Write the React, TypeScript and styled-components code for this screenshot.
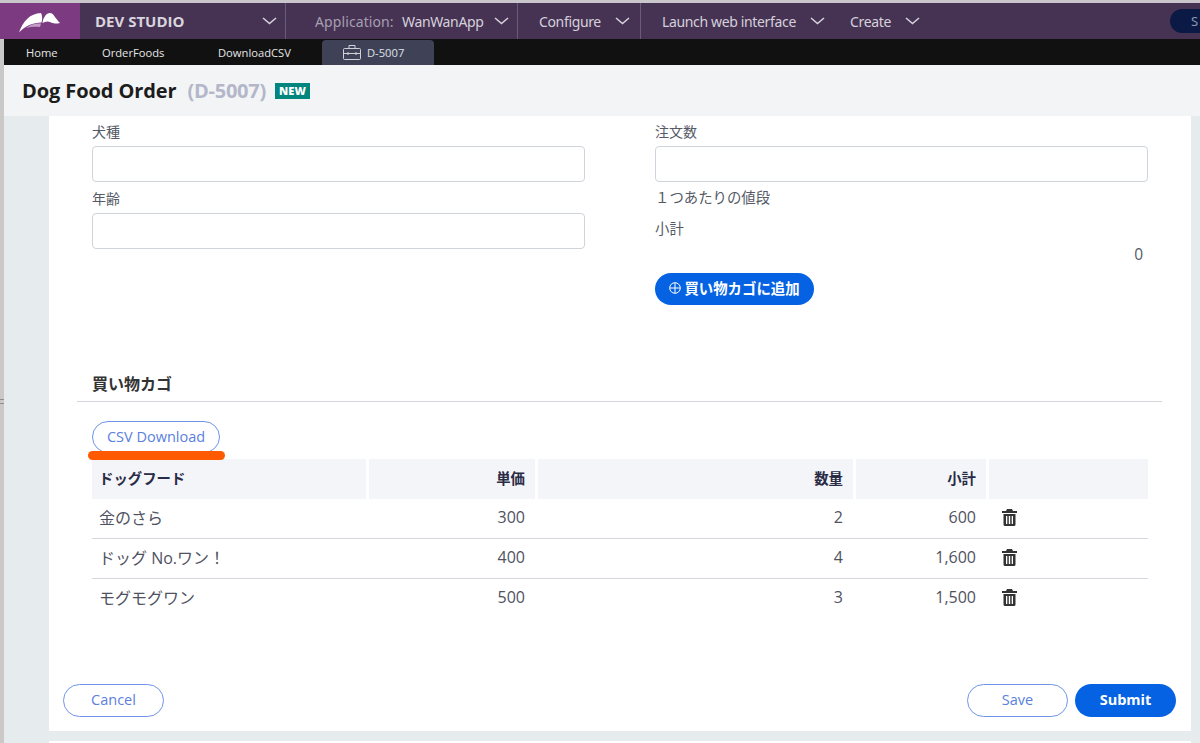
import styled, { createGlobalStyle } from "styled-components";

const GlobalStyle = createGlobalStyle`
    html, body {
        margin: 0;
        padding: 0;
        background: #ffffff;
    }
    body {
        font-family: "Open Sans", "Noto Sans CJK JP", sans-serif;
    }
`;

const Page = styled.div`
    position: relative;
    width: 1200px;
    height: 743px;
    overflow: hidden;
    background: #e6ebee;
`;

const TopEdge = styled.div`
    height: 3px;
    background: #c9c6cc;
`;

const Header = styled.header`
    display: flex;
    align-items: center;
    height: 36px;
    background: #463354;
    color: #d5d0da;
    font-family: "Noto Sans", "Open Sans", sans-serif;
    font-size: 14px;
`;

const LogoBox = styled.div`
    display: flex;
    align-items: center;
    justify-content: center;
    box-sizing: border-box;
    width: 80px;
    height: 100%;
    padding-top: 4px;
    background: #7c3a80;
`;

const NavGroup = styled.div<{ $width: number; $pad: number; $line?: boolean }>`
    display: flex;
    align-items: center;
    box-sizing: border-box;
    width: ${(p) => p.$width}px;
    height: 100%;
    padding-left: ${(p) => p.$pad}px;
    border-right: ${(p) => (p.$line ? "1px solid #6c5a7a" : "none")};
    white-space: nowrap;
`;

const Brand = styled.span`
    width: 167px;
    font-family: "Open Sans", sans-serif;
    font-size: 15px;
    font-weight: 700;
    color: #d9d5de;
`;

const NavText = styled.span<{ $width: number; $dim?: boolean }>`
    display: inline-block;
    width: ${(p) => p.$width}px;
    letter-spacing: ${(p) => (p.$dim ? "0.1px" : "-0.35px")};
    color: ${(p) => (p.$dim ? "#a79fb0" : "#d5d0da")};
`;

const Search = styled.div`
    margin-left: auto;
    box-sizing: border-box;
    width: 30px;
    height: 24px;
    padding-left: 21px;
    border-radius: 12px 0 0 12px;
    background: #0b1a44;
    color: #8d97b0;
    font-size: 13px;
    line-height: 24px;
`;

const Body = styled.div`
    display: flex;
    height: 704px;
`;

const Rail = styled.div`
    position: relative;
    flex: 0 0 4px;
    background: #cbc9c8;

    &::after {
        content: "";
        position: absolute;
        top: 360px;
        left: 0;
        width: 4px;
        height: 3px;
        border-top: 1px solid #8f8f8f;
        border-bottom: 1px solid #8f8f8f;
    }
`;

const Main = styled.div`
    display: flex;
    flex: 1;
    flex-direction: column;
    min-width: 0;
`;

const TabBar = styled.nav`
    display: flex;
    align-items: flex-end;
    box-sizing: border-box;
    height: 26px;
    padding-left: 22px;
    background: #111111;
    color: #e6e6e6;
    font-size: 11.2px;
`;

const Tab = styled.div<{ $width: number }>`
    width: ${(p) => p.$width}px;
    height: 25px;
    line-height: 25px;
    white-space: nowrap;
`;

const ActiveTab = styled.div`
    display: flex;
    align-items: center;
    gap: 6px;
    box-sizing: border-box;
    width: 112px;
    height: 25px;
    padding-left: 21px;
    border-radius: 4px 4px 0 0;
    background: #3f4257;
    color: #dfe0e6;
`;

const TitleBar = styled.div`
    display: flex;
    align-items: center;
    box-sizing: border-box;
    height: 51px;
    padding-left: 18px;
    background: #f3f4f6;
`;

const Title = styled.h1`
    margin: 0;
    font-size: 20px;
    font-weight: 700;
    letter-spacing: -0.1px;
    color: #1c1c1c;
`;

const CaseId = styled.span`
    margin-left: 11px;
    font-size: 20px;
    font-weight: 700;
    letter-spacing: -0.25px;
    color: #b3b7c9;
`;

const Badge = styled.span`
    margin-left: 9px;
    padding: 0 4px;
    height: 16px;
    background: #00857f;
    color: #ffffff;
    font-size: 11px;
    font-weight: 800;
    line-height: 16px;
    letter-spacing: 0.2px;
`;

const Panel = styled.main`
    box-sizing: border-box;
    height: 615px;
    margin: 0 9px 0 45px;
    padding: 6px 15px 0 14px;
    background: #ffffff;
`;

const BottomStrip = styled.div`
    flex: 1;
    margin: 10px 9px 0 45px;
    background: #ffffff;
`;

const FormGrid = styled.div`
    display: grid;
    grid-template-columns: 493px 493px;
    column-gap: 70px;
    padding-left: 29px;
`;

const Column = styled.div`
    display: flex;
    flex-direction: column;
`;

const Label = styled.label`
    height: 20px;
    margin-bottom: 4px;
    color: #555a66;
    font-size: 14px;
    line-height: 20px;
`;

const Input = styled.input<{ $last?: boolean }>`
    box-sizing: border-box;
    width: 100%;
    height: 36px;
    margin-bottom: ${(p) => (p.$last ? 0 : 7)}px;
    border: 1px solid #cfd3dc;
    border-radius: 4px;
    background: #ffffff;
`;

const ReadOnly = styled.div<{ $top: number; $right?: boolean }>`
    height: 20px;
    margin-top: ${(p) => p.$top}px;
    padding-right: ${(p) => (p.$right ? 5 : 0)}px;
    color: #555a66;
    font-size: ${(p) => (p.$right ? 15.5 : 14.4)}px;
    line-height: 20px;
    text-align: ${(p) => (p.$right ? "right" : "left")};
`;

const AddButton = styled.button`
    display: flex;
    align-items: center;
    justify-content: center;
    gap: 3px;
    box-sizing: border-box;
    width: 159px;
    height: 32px;
    margin-top: 9px;
    padding: 0 0 3px;
    border: none;
    border-radius: 16px;
    background: #0563e3;
    color: #ffffff;
    font-family: inherit;
    font-size: 14.4px;
    font-weight: 700;
`;

const Section = styled.section`
    margin: 68px 14px 0 14px;
`;

const SectionHeading = styled.h2`
    height: 22px;
    margin: 0;
    padding: 0 0 6px 15px;
    border-bottom: 1px solid #d3d7dc;
    color: #333333;
    font-size: 16px;
    font-weight: 700;
    line-height: 22px;
`;

const SectionBody = styled.div`
    padding: 19px 14px 0 15px;
`;

const ButtonWrap = styled.div`
    position: relative;
    width: fit-content;
    margin-bottom: 6px;
`;

const Marker = styled.div`
    position: absolute;
    left: -4px;
    top: 30px;
    width: 137px;
    height: 9px;
    border-radius: 5px;
    background: #ff5a00;
`;

const OutlineButton = styled.button<{ $width: number }>`
    display: block;
    box-sizing: border-box;
    width: ${(p) => p.$width}px;
    height: ${(p) => (p.$width === 128 ? 32 : 33)}px;
    padding: 0 0 2px;
    border: 1px solid #6f94e8;
    border-radius: 17px;
    background: #ffffff;
    color: #5a80e0;
    font-family: inherit;
    font-size: 14.5px;
`;

const SubmitButton = styled.button`
    box-sizing: border-box;
    width: 101px;
    height: 33px;
    padding: 0 0 2px;
    border: none;
    border-radius: 17px;
    background: #0563e3;
    color: #ffffff;
    font-family: inherit;
    font-size: 14.5px;
    font-weight: 700;
`;

const Row = styled.div<{ $head?: boolean; $line?: boolean }>`
    display: grid;
    grid-template-columns: 274px 166px 315px 130px 159px;
    column-gap: 3px;
    box-sizing: border-box;
    height: ${(p) => (p.$head || p.$line ? 40 : 39)}px;
    border-bottom: ${(p) => (p.$line ? "1px solid #d6d8e0" : "none")};
`;

const Cell = styled.div<{ $head?: boolean; $right?: boolean }>`
    display: flex;
    align-items: center;
    justify-content: ${(p) => (p.$right ? "flex-end" : "flex-start")};
    padding: 0 10px 3px 7px;
    background: ${(p) => (p.$head ? "#f3f5f9" : "transparent")};
    color: ${(p) => (p.$head ? "#2a2b45" : "#50525f")};
    font-size: ${(p) => (p.$head ? 14.4 : 16)}px;
    font-weight: ${(p) => (p.$head ? 700 : 400)};
`;

const IconCell = styled(Cell)`
    padding: 0 0 2px 13px;
`;

const Footer = styled.footer`
    display: flex;
    gap: 7px;
    margin-top: 66px;
`;

const Spacer = styled.div`
    flex: 1;
`;

function Chevron() {
    return (
        <svg width="15" height="8" viewBox="0 0 15 8" fill="none">
            <path d="M1 1l6.5 5.5L14 1" stroke="#d5d0da" strokeWidth="1.6" />
        </svg>
    );
}

function Logo() {
    return (
        <svg width="42" height="20" viewBox="0 0 42 20">
            <path d="M0 19.5C4 8 11 .5 22 0c1.500 3 1.500 6 .5 9.500C14 9.500 6 13 0 19.500z" fill="#ffffff" />
            <path d="M7 15c5-4 10-5 15-4.500l-1 3.500c-5-.5-10 0-14 1z" fill="#c39fc7" />
            <path d="M23.500 10C24 5 27 0 31 0c3.500 0 5 5 10 10-4 1-7 .5-10-1-2.500-1-5-.5-7.500 1z" fill="#ffffff" />
        </svg>
    );
}

function CaseIcon() {
    return (
        <svg width="18" height="15" viewBox="0 0 18 15" fill="none" stroke="#cfd0d8" strokeWidth="1">
            <rect x="0.5" y="3.500" width="17" height="11" rx="1" />
            <path d="M6 3.500V0.500h6v3M0.500 8.500h17M5 7v3M13 7v3" />
        </svg>
    );
}

function PlusCircle() {
    return (
        <svg width="12" height="12" viewBox="0 0 12 12" fill="none" stroke="#ffffff" strokeWidth="1">
            <circle cx="6" cy="6" r="5.300" />
            <path d="M6 1v10M1 6h10" />
        </svg>
    );
}

function Trash() {
    return (
        <svg width="15" height="17" viewBox="0 0 15 17">
            <path
                fill="#333333"
                d="M5 0h5l1 2h4v2H0V2h4zM1.500 5h12v10.500a1.500 1.500 0 0 1-1.500 1.500H3a1.500 1.500 0 0 1-1.500-1.500zM4 7v8h1.300V7zm2.800 0v8h1.400V7zm2.900 0v8H11V7z"
                fillRule="evenodd"
            />
        </svg>
    );
}

const cart = [
    { name: "金のさら", price: "300", qty: "2", total: "600" },
    { name: "ドッグ No.ワン！", price: "400", qty: "4", total: "1,600" },
    { name: "モグモグワン", price: "500", qty: "3", total: "1,500" },
];

export default function App() {
    return (
        <Page>
            <GlobalStyle />
            <TopEdge />
            <Header>
                <LogoBox>
                    <Logo />
                </LogoBox>
                <NavGroup $width={206} $pad={15} $line>
                    <Brand>DEV STUDIO</Brand>
                    <Chevron />
                </NavGroup>
                <NavGroup $width={232} $pad={29} $line>
                    <NavText $width={87} $dim>Application:</NavText>
                    <NavText $width={92}>WanWanApp</NavText>
                    <Chevron />
                </NavGroup>
                <NavGroup $width={123} $pad={21} $line>
                    <NavText $width={76}>Configure</NavText>
                    <Chevron />
                </NavGroup>
                <NavGroup $width={188} $pad={21}>
                    <NavText $width={148}>Launch web interface</NavText>
                    <Chevron />
                </NavGroup>
                <NavGroup $width={100} $pad={21}>
                    <NavText $width={55}>Create</NavText>
                    <Chevron />
                </NavGroup>
                <Search>S</Search>
            </Header>
            <Body>
                <Rail />
                <Main>
                    <TabBar>
                        <Tab $width={76}>Home</Tab>
                        <Tab $width={116}>OrderFoods</Tab>
                        <Tab $width={104}>DownloadCSV</Tab>
                        <ActiveTab>
                            <CaseIcon />
                            D-5007
                        </ActiveTab>
                    </TabBar>
                    <TitleBar>
                        <Title>Dog Food Order</Title>
                        <CaseId>(D-5007)</CaseId>
                        <Badge>NEW</Badge>
                    </TitleBar>
                    <Panel>
                        <FormGrid>
                            <Column>
                                <Label>犬種</Label>
                                <Input />
                                <Label>年齢</Label>
                                <Input />
                            </Column>
                            <Column>
                                <Label>注文数</Label>
                                <Input $last />
                                <ReadOnly $top={6}>１つあたりの値段</ReadOnly>
                                <ReadOnly $top={11}>小計</ReadOnly>
                                <ReadOnly $top={5} $right>0</ReadOnly>
                                <AddButton>
                                    <PlusCircle />
                                    買い物カゴに追加
                                </AddButton>
                            </Column>
                        </FormGrid>
                        <Section>
                            <SectionHeading>買い物カゴ</SectionHeading>
                            <SectionBody>
                                <ButtonWrap>
                                    <OutlineButton $width={128}>CSV Download</OutlineButton>
                                    <Marker />
                                </ButtonWrap>
                                <Row $head>
                                    <Cell $head>ドッグフード</Cell>
                                    <Cell $head $right>単価</Cell>
                                    <Cell $head $right>数量</Cell>
                                    <Cell $head $right>小計</Cell>
                                    <Cell $head />
                                </Row>
                                {cart.map((item, i) => (
                                    <Row key={item.name} $line={i < cart.length - 1 || undefined}>
                                        <Cell>{item.name}</Cell>
                                        <Cell $right>{item.price}</Cell>
                                        <Cell $right>{item.qty}</Cell>
                                        <Cell $right>{item.total}</Cell>
                                        <IconCell>
                                            <Trash />
                                        </IconCell>
                                    </Row>
                                ))}
                            </SectionBody>
                        </Section>
                        <Footer>
                            <OutlineButton $width={101}>Cancel</OutlineButton>
                            <Spacer />
                            <OutlineButton $width={101}>Save</OutlineButton>
                            <SubmitButton>Submit</SubmitButton>
                        </Footer>
                    </Panel>
                    <BottomStrip />
                </Main>
            </Body>
        </Page>
    );
}
